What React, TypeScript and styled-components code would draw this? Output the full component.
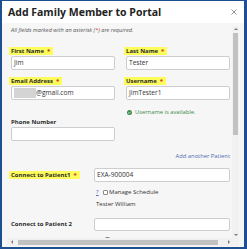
import React from 'react'
import styled, { createGlobalStyle } from 'styled-components'

const GlobalStyle = createGlobalStyle`
  html, body {
    margin: 0;
    padding: 0;
    background: #ffffff;
  }
  * {
    box-sizing: border-box;
  }
`

const Frame = styled.div`
  width: 247px;
  height: 249px;
  display: flex;
  flex-direction: column;
  border-style: solid;
  border-color: #1d4f91;
  border-width: 1px 3px 2px 2px;
  background: #ffffff;
  font-family: 'Open Sans', 'Liberation Sans', sans-serif;
  font-size: 6px;
  line-height: 8px;
  color: #333;
  overflow: hidden;
`

const Header = styled.div`
  height: 22px;
  flex: none;
  display: flex;
  align-items: center;
  padding: 0 7px 0 6px;
`

const Title = styled.h1`
  margin: 0;
  font-size: 10.5px;
  font-weight: 700;
  color: #222;
  line-height: 1;
`

const CloseButton = styled.button`
  margin-left: auto;
  width: 6px;
  height: 6px;
  padding: 0;
  border: none;
  background: transparent;
  display: flex;
`

const Body = styled.div`
  flex: 1;
  min-height: 0;
  background: #f6f6f6;
  padding: 3px 5px 1px 5px;
  display: grid;
  grid-template-columns: 1fr 7px;
  grid-template-rows: 1fr 8px;
`

const Content = styled.div`
  overflow: hidden;
  padding: 0 2px 0 4px;
  display: flex;
  flex-direction: column;
`

const Note = styled.div`
  font-size: 5.6px;
  font-style: italic;
  line-height: 8px;
  height: 8px;
  color: #555;
  white-space: nowrap;
`

const Star = styled.span`
  color: #d8232a;
  font-weight: 700;
  margin-left: 3px;
`

const TwoCols = styled.div<{ $top: number }>`
  display: grid;
  grid-template-columns: 104px 104px;
  column-gap: 11px;
  margin-top: ${p => p.$top}px;
  align-items: start;
`

const Field = styled.div`
  display: flex;
  flex-direction: column;
  align-items: flex-start;
`

const Label = styled.label<{ $req?: boolean }>`
  display: inline-block;
  height: 8px;
  line-height: 8px;
  font-size: 6px;
  font-weight: 700;
  color: #2b2b2b;
  white-space: nowrap;
  margin-bottom: 1px;
  ${p => p.$req && `
    background: #fcfc5a;
    padding: 0 3px 0 2px;
    margin-left: -2px;
  `}
`

const LabelCell = styled.div`
  display: flex;
  align-items: center;
  height: 8px;
`

const Input = styled.div<{ $h?: number }>`
  width: 100%;
  height: ${p => p.$h ?? 14}px;
  background: #ffffff;
  border: 1px solid #cdcdcd;
  border-radius: 2px;
  display: flex;
  align-items: center;
  padding-left: 2px;
  font-size: 6.6px;
  color: #333;
  white-space: nowrap;
`

const Redacted = styled.span`
  display: inline-block;
  width: 22px;
  height: 10px;
  background: #d4d4d4;
  filter: blur(0.6px);
`

const Available = styled.div`
  display: flex;
  align-items: center;
  gap: 3px;
  margin-top: 8px;
  height: 8px;
  padding-left: 1px;
  font-size: 5.8px;
  color: #3d8a4a;
`

const LinkRow = styled.div`
  margin-top: 11px;
  height: 8px;
  line-height: 8px;
  text-align: right;
  font-size: 5.8px;
  color: #4a6db3;
`

const PatientRow = styled.div<{ $top: number }>`
  display: grid;
  grid-template-columns: 83px 1fr;
  align-items: center;
  margin-top: ${p => p.$top}px;
`

const SubRow = styled.div<{ $top: number }>`
  display: flex;
  align-items: center;
  height: 8px;
  margin-top: ${p => p.$top}px;
  padding-left: 85px;
  font-size: 6px;
  color: #333;
  white-space: nowrap;
`

const Help = styled.span`
  color: #4a6db3;
  text-decoration: underline;
  margin-right: 4px;
`

const Checkbox = styled.span<{ $indent?: boolean }>`
  width: 5px;
  height: 5px;
  border: 1px solid #8a8a8a;
  border-radius: 1px;
  background: #fff;
  margin-right: 1.5px;
  margin-left: ${p => (p.$indent ? 9 : 0)}px;
`

const VScroll = styled.div`
  background: #f1f1f1;
  display: flex;
  flex-direction: column;
  align-items: center;
  padding: 1px 1px;
`

const HScroll = styled.div`
  background: #f1f1f1;
  display: flex;
  align-items: center;
  padding: 0 1px 0 3px;
`

const Corner = styled.div`
  background: #f1f1f1;
`

const Arrow = styled.div<{ $dir: 'up' | 'down' | 'left' | 'right' }>`
  flex: none;
  width: 0;
  height: 0;
  border: 2px solid transparent;
  ${p => p.$dir === 'up' && 'border-bottom-color: #7a7a7a; border-top-width: 0; margin: 1px 0;'}
  ${p => p.$dir === 'down' && 'border-top-color: #7a7a7a; border-bottom-width: 0; margin: 1px 0;'}
  ${p => p.$dir === 'left' && 'border-right-color: #7a7a7a; border-left-width: 0; margin: 0 1px;'}
  ${p => p.$dir === 'right' && 'border-left-color: #7a7a7a; border-right-width: 0; margin: 0 1px;'}
`

const VThumb = styled.div`
  width: 5px;
  height: 102px;
  margin-top: 2px;
  background: #c1c1c1;
`

const VSpacer = styled.div`
  flex: 1;
`

const HThumb = styled.div`
  width: 200px;
  height: 5px;
  margin-left: 4px;
  background: #c1c1c1;
`

const HSpacer = styled.div`
  flex: 1;
`

const CheckIcon = () => (
  <svg width="5" height="5" viewBox="0 0 10 10">
    <circle cx="5" cy="5" r="5" fill="#3d8a4a" />
    <path d="M2.6 5.2 L4.3 6.8 L7.4 3.4" stroke="#fff" strokeWidth="1.5" fill="none" />
  </svg>
)

const App: React.FC = () => {
  return (
    <>
      <GlobalStyle />
      <Frame>
        <Header>
          <Title>Add Family Member to Portal</Title>
          <CloseButton aria-label="Close">
            <svg width="6" height="6" viewBox="0 0 6 6">
              <path d="M0.5 0.5 L5.5 5.5 M5.5 0.5 L0.5 5.5" stroke="#8a8a8a" strokeWidth="0.9" />
            </svg>
          </CloseButton>
        </Header>
        <Body>
          <Content>
            <Note>
              All fields marked with an asterisk (<span style={{ color: '#d8232a' }}>*</span>) are required.
            </Note>

            <TwoCols $top={13}>
              <Field>
                <Label $req>First Name<Star>*</Star></Label>
                <Input>Jim</Input>
              </Field>
              <Field>
                <Label $req>Last Name<Star>*</Star></Label>
                <Input>Tester</Input>
              </Field>
            </TwoCols>

            <TwoCols $top={7}>
              <Field>
                <Label $req>Email Address<Star>*</Star></Label>
                <Input><Redacted />@gmail.com</Input>
              </Field>
              <Field>
                <Label $req>Username<Star>*</Star></Label>
                <Input>JimTester1</Input>
                <Available>
                  <CheckIcon />
                  Username is available.
                </Available>
              </Field>
            </TwoCols>

            <TwoCols $top={2}>
              <Field>
                <Label>Phone Number</Label>
                <Input />
              </Field>
            </TwoCols>

            <LinkRow>Add another Patient</LinkRow>

            <PatientRow $top={8}>
              <LabelCell>
                <Label $req>Connect to Patient1<Star>*</Star></Label>
              </LabelCell>
              <Input>EXA-900004</Input>
            </PatientRow>
            <SubRow $top={6}>
              <Help>?</Help>
              <Checkbox />
              Manage Schedule
            </SubRow>
            <SubRow $top={4}>Tester William</SubRow>

            <PatientRow $top={10}>
              <LabelCell>
                <Label>Connect to Patient 2</Label>
              </LabelCell>
              <Input $h={13} />
            </PatientRow>
            <SubRow $top={6}>
              <Checkbox $indent />
            </SubRow>
          </Content>

          <VScroll>
            <Arrow $dir="up" />
            <VThumb />
            <VSpacer />
            <Arrow $dir="down" />
          </VScroll>

          <HScroll>
            <Arrow $dir="left" />
            <HThumb />
            <HSpacer />
            <Arrow $dir="right" />
          </HScroll>
          <Corner />
        </Body>
      </Frame>
    </>
  )
}

export default App
